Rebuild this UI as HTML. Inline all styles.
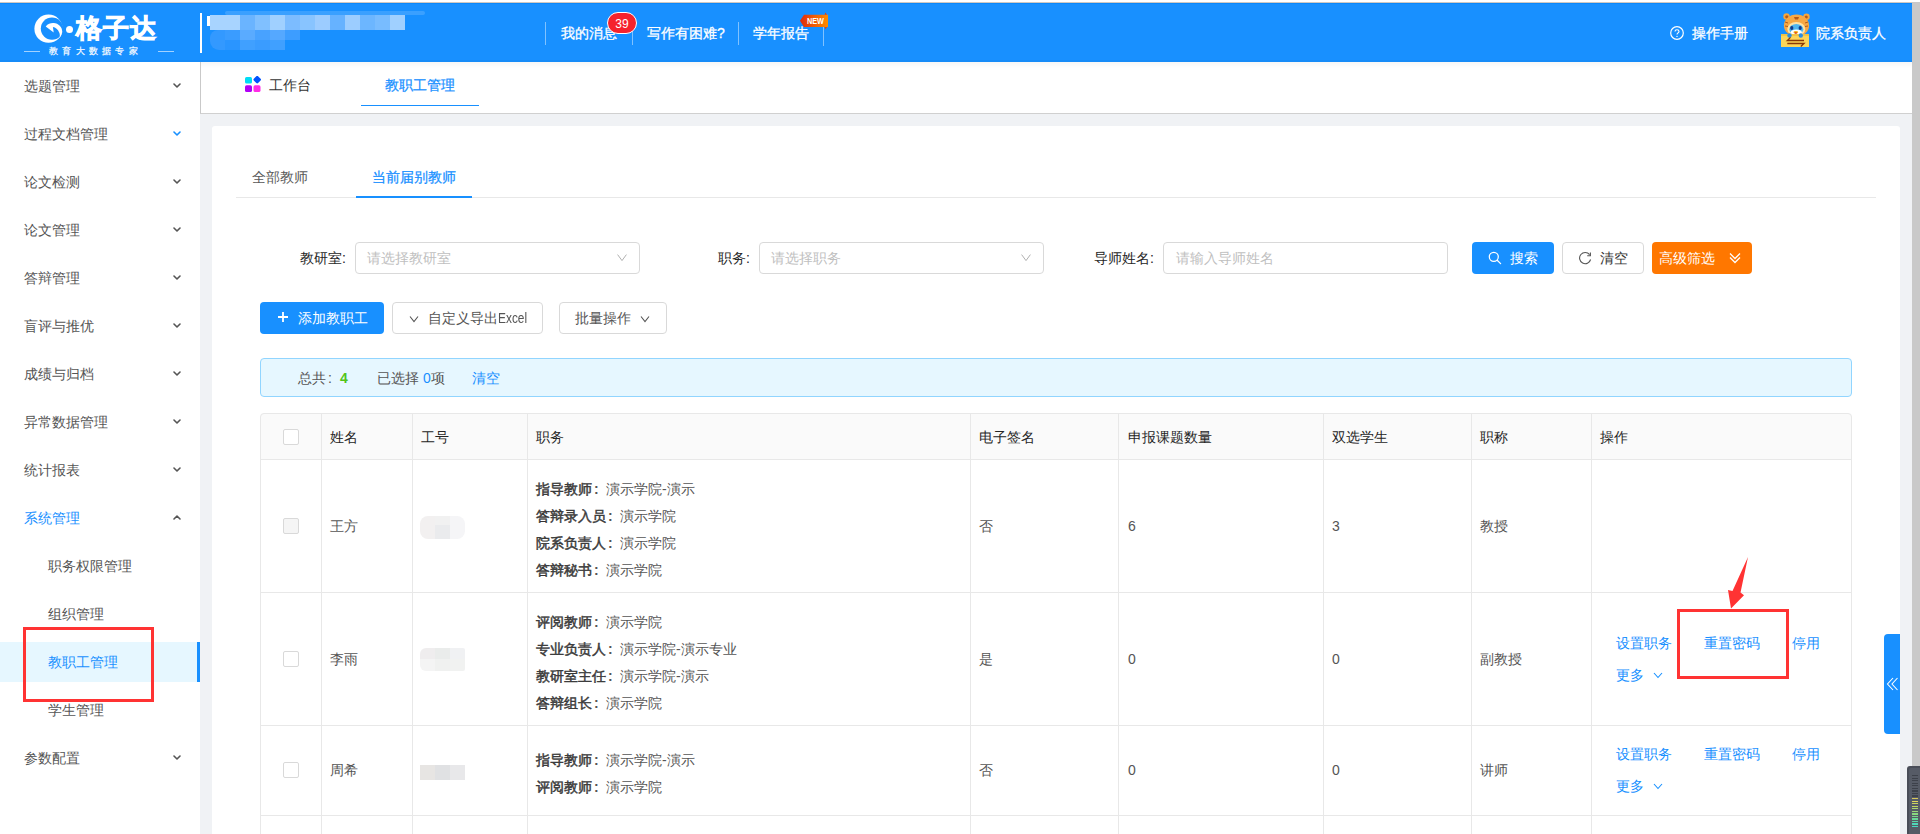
<!DOCTYPE html>
<html><head><meta charset="utf-8">
<style>
*{box-sizing:border-box;margin:0;padding:0}
html,body{width:1920px;height:834px;overflow:hidden;background:#fff;font-family:"Liberation Sans",sans-serif;font-size:14px;color:#333}
.a{position:absolute}
.t{position:absolute;white-space:nowrap;line-height:20px;font-size:14px}
#hdr{left:0;top:2px;width:1912px;height:60px;background:#1890ff;border-top:1px solid #cfc8c2}
#side{left:0;top:62px;width:200px;height:772px;background:#fff}
.mi{position:absolute;left:24px;color:#555;line-height:20px;font-size:14px;white-space:nowrap}
.chev{position:absolute;left:173px;width:8px;height:5px}
#main{left:200px;top:62px;width:1712px;height:772px;background:#f0f2f5}
#tabbar{left:200px;top:62px;width:1712px;height:52px;background:#fff;border-left:1px solid #c9c9c9;border-bottom:1px solid #d0d0d0}
#card{left:212px;top:126px;width:1688px;height:720px;background:#fff;border-radius:3px}
.sel{position:absolute;height:32px;border:1px solid #d9d9d9;border-radius:4px;background:#fff}
.ph{color:#bfbfbf}
.btn{position:absolute;border-radius:4px}
.th{position:absolute;top:413px;height:47px;background:#fafafa}
.vl{position:absolute;width:1px;background:#e8e8e8}
.hl{position:absolute;height:1px;background:#e8e8e8}
.cb{position:absolute;width:16px;height:16px;border:1px solid #d9d9d9;border-radius:2px;background:#fff}
.b{font-weight:bold}
.col{display:inline-block;width:14px;padding-left:2px}
b{font-weight:400;-webkit-text-stroke:0.45px #333}
.lk{color:#1890ff}
#sb{left:1912px;top:2px;width:8px;height:832px;background:#c9c9c9}
</style></head><body>
<!-- header -->
<div id="hdr" class="a"></div>
<div id="sb" class="a"></div>
<div class="a" style="left:0;top:3px;width:1912px;height:1px;background:#0a88fb"></div>
<!-- logo -->
<svg class="a" style="left:30px;top:12px" width="36" height="34" viewBox="30 12 36 34">
  <defs><mask id="lm"><rect x="30" y="12" width="36" height="34" fill="#fff"/><circle cx="52" cy="28.6" r="11.2" fill="#000"/></mask></defs>
  <circle cx="48.5" cy="28.7" r="14.1" fill="#fff" mask="url(#lm)"/>
  <path d="M45.7 26.5 C 48 23.5 51 22.8 53.7 23 C 58.5 23.4 62.2 27 62.2 31.6 C 62.2 34 61 36.5 59.4 38 C 60 36 60 34 59.2 32.4 C 58 29.5 55.5 27.3 52.9 27.1 L 53.7 32.4 Z" fill="#fff"/>
</svg>
<div class="a" style="left:66px;top:26px;width:7px;height:7px;border-radius:50%;background:#fff"></div>
<div class="t" style="left:76px;top:13px;font-size:26px;line-height:30px;color:#fff;font-weight:900;letter-spacing:1px;-webkit-text-stroke:0.9px #fff">格子达</div>
<div class="a" style="left:24px;top:51px;width:16px;height:1px;background:rgba(255,255,255,.6)"></div>
<div class="a" style="left:158px;top:51px;width:16px;height:1px;background:rgba(255,255,255,.6)"></div>
<div class="t" style="left:49px;top:45px;font-size:9px;line-height:12px;color:rgba(255,255,255,.9);letter-spacing:4.3px;font-weight:bold">教育大数据专家</div>
<!-- divider -->
<div class="a" style="left:200px;top:13px;width:2px;height:40px;background:#fff"></div>
<!-- pixelated blur -->
<div class="a" style="left:225px;top:11px;width:200px;height:4px;background:rgba(255,255,255,.15);border-radius:2px"></div>
<div class="a" style="left:210px;top:15px;width:195px;height:15px;display:flex">
<i style="width:15px;background:#a8d4ff"></i><i style="width:15px;background:#a8d4ff"></i><i style="width:15px;background:#6ab4ff"></i><i style="width:15px;background:#80c0ff"></i><i style="width:15px;background:#a0d0ff"></i><i style="width:15px;background:#7cbcff"></i><i style="width:15px;background:#88c4ff"></i><i style="width:15px;background:#9cccff"></i><i style="width:15px;background:#66b2ff"></i><i style="width:15px;background:#9ccdff"></i><i style="width:15px;background:#6cb6ff"></i><i style="width:15px;background:#78bcff"></i><i style="width:15px;background:#a0d0ff"></i>
</div>
<div class="a" style="left:210px;top:30px;width:90px;height:10px;display:flex;border-radius:8px 0 0 0;overflow:hidden">
<i style="width:15px;background:#3399ff"></i><i style="width:15px;background:#3a9cff"></i><i style="width:15px;background:#5aabff"></i><i style="width:15px;background:#48a2ff"></i><i style="width:15px;background:#55a8ff"></i><i style="width:15px;background:#3d9dff"></i>
</div>
<div class="a" style="left:210px;top:40px;width:75px;height:10px;display:flex;border-radius:0 0 0 9px;overflow:hidden">
<i style="width:15px;background:#3399ff"></i><i style="width:15px;background:#2a95ff"></i><i style="width:15px;background:#40a0ff"></i><i style="width:15px;background:#3a9cff"></i><i style="width:15px;background:#40a0ff"></i>
</div>
<div class="a" style="left:207px;top:16px;width:3px;height:10px;background:#fff"></div>
<!-- nav -->
<div class="a" style="left:545px;top:22px;width:1px;height:23px;background:rgba(255,255,255,.45)"></div>
<div class="t" style="left:561px;top:23px;color:#fff;-webkit-text-stroke:0.3px #fff">我的消息</div>
<div class="a" style="left:632px;top:22px;width:1px;height:23px;background:rgba(255,255,255,.45)"></div>
<div class="a" style="left:607px;top:12px;width:30px;height:22px;border-radius:11px;background:#f5222d;border:1px solid #fff;color:#fff;font-size:12px;line-height:22px;text-align:center">39</div>
<div class="t" style="left:647px;top:23px;color:#fff;-webkit-text-stroke:0.3px #fff">写作有困难?</div>
<div class="a" style="left:738px;top:22px;width:1px;height:23px;background:rgba(255,255,255,.45)"></div>
<div class="t" style="left:753px;top:23px;color:#fff;-webkit-text-stroke:0.3px #fff">学年报告</div>
<div class="a" style="left:823px;top:23px;width:1px;height:23px;background:rgba(255,255,255,.45)"></div>
<svg class="a" style="left:799px;top:12px" width="30" height="18" viewBox="0 0 30 18">
  <defs><linearGradient id="ng" x1="0" x2="1"><stop offset="0" stop-color="#e02a0c"/><stop offset="1" stop-color="#ff8c00"/></linearGradient></defs>
  <path d="M1 8.8 L5 2.8 L29 2.8 L29 15 L5 15 Z" fill="url(#ng)"/>
  <path d="M25.5 2.8 L26.5 0.5 L28 2.8 Z M25.5 15 L26.5 17.3 L28 15 Z" fill="#e8400a"/>
  <text x="8" y="12.2" font-family="Liberation Sans" font-size="9" font-weight="bold" fill="#fff" textLength="17" lengthAdjust="spacingAndGlyphs">NEW</text>
</svg>
<!-- right -->
<svg class="a" style="left:1670px;top:26px" width="14" height="14" viewBox="0 0 14 14"><circle cx="7" cy="7" r="6.3" fill="none" stroke="#fff" stroke-width="1.2"/><path d="M5 5.4 C5 3.2 9 3.2 9 5.4 C9 6.8 7 7 7 8.6" fill="none" stroke="#fff" stroke-width="1.1"/><circle cx="7" cy="10.4" r="0.7" fill="#fff"/></svg>
<div class="t" style="left:1692px;top:23px;color:#fff;-webkit-text-stroke:0.3px #fff">操作手册</div>
<svg class="a" style="left:1776px;top:10px" width="38" height="40" viewBox="1776 10 38 40">
  <circle cx="1786.5" cy="16.5" r="3.2" fill="#f6a63c"/><circle cx="1806.5" cy="16.8" r="3.2" fill="#f6a63c"/>
  <circle cx="1786.8" cy="16.8" r="1.6" fill="#b35a1a"/><circle cx="1806.2" cy="17" r="1.6" fill="#b35a1a"/>
  <ellipse cx="1796.5" cy="25.5" rx="12.6" ry="11" fill="#f7a844"/>
  <path d="M1794 17 L1799 17 L1798 19.5 L1795 19.5 Z" fill="#b35a1a"/>
  <path d="M1785 22 L1788 23 M1785 26 L1788 26.5 M1808 22 L1805 23 M1808 26 L1805 26.5" stroke="#b35a1a" stroke-width="1"/>
  <ellipse cx="1796.3" cy="29" rx="9" ry="7" fill="#fde3a8"/>
  <ellipse cx="1796.3" cy="29.2" rx="7" ry="5.2" fill="#4fb6f0"/>
  <ellipse cx="1796.3" cy="32.2" rx="5.5" ry="2.6" fill="#fff"/>
  <ellipse cx="1791.8" cy="28" rx="1.6" ry="2.1" fill="#123a8a"/><ellipse cx="1800.2" cy="28" rx="1.6" ry="2.1" fill="#123a8a"/>
  <ellipse cx="1795.8" cy="32.3" rx="2.4" ry="1.3" fill="#f5b31a"/>
  <ellipse cx="1795.8" cy="33" rx="1.3" ry="0.8" fill="#e02a0a"/>
  <rect x="1781" y="34.2" width="28" height="12.8" fill="#fcd559"/>
  <rect x="1781" y="34.2" width="28" height="1.6" fill="#f0c040"/>
  <circle cx="1789.5" cy="35.5" r="2.2" fill="#2e8ee0"/><circle cx="1800.8" cy="35.5" r="2.2" fill="#2e8ee0"/>
  <path d="M1790.5 37.4 L1787.3 40.5 L1804 40.5 M1787.3 43.5 L1804 43.5 L1800.8 46.5" fill="none" stroke="#8a3808" stroke-width="1.3"/>
</svg>
<div class="t" style="left:1816px;top:23px;color:#fff;-webkit-text-stroke:0.3px #fff">院系负责人</div>


<!-- sidebar -->
<div id="side" class="a"></div>
<div class="a" style="left:0;top:642px;width:200px;height:40px;background:#e6f7ff"></div>
<div class="a" style="left:197px;top:642px;width:3px;height:40px;background:#1890ff"></div>
<div class="mi" style="left:24px;top:76px;color:#555">选题管理</div>
<svg class="a" style="left:173px;top:83px" width="8" height="5" viewBox="0 0 8 5"><path d="M1 1 L4 4 L7 1" fill="none" stroke="#555" stroke-width="1.6" stroke-linecap="round" stroke-linejoin="round"/></svg>
<div class="mi" style="left:24px;top:124px;color:#555">过程文档管理</div>
<svg class="a" style="left:173px;top:131px" width="8" height="5" viewBox="0 0 8 5"><path d="M1 1 L4 4 L7 1" fill="none" stroke="#1890ff" stroke-width="1.6" stroke-linecap="round" stroke-linejoin="round"/></svg>
<div class="mi" style="left:24px;top:172px;color:#555">论文检测</div>
<svg class="a" style="left:173px;top:179px" width="8" height="5" viewBox="0 0 8 5"><path d="M1 1 L4 4 L7 1" fill="none" stroke="#555" stroke-width="1.6" stroke-linecap="round" stroke-linejoin="round"/></svg>
<div class="mi" style="left:24px;top:220px;color:#555">论文管理</div>
<svg class="a" style="left:173px;top:227px" width="8" height="5" viewBox="0 0 8 5"><path d="M1 1 L4 4 L7 1" fill="none" stroke="#555" stroke-width="1.6" stroke-linecap="round" stroke-linejoin="round"/></svg>
<div class="mi" style="left:24px;top:268px;color:#555">答辩管理</div>
<svg class="a" style="left:173px;top:275px" width="8" height="5" viewBox="0 0 8 5"><path d="M1 1 L4 4 L7 1" fill="none" stroke="#555" stroke-width="1.6" stroke-linecap="round" stroke-linejoin="round"/></svg>
<div class="mi" style="left:24px;top:316px;color:#555">盲评与推优</div>
<svg class="a" style="left:173px;top:323px" width="8" height="5" viewBox="0 0 8 5"><path d="M1 1 L4 4 L7 1" fill="none" stroke="#555" stroke-width="1.6" stroke-linecap="round" stroke-linejoin="round"/></svg>
<div class="mi" style="left:24px;top:364px;color:#555">成绩与归档</div>
<svg class="a" style="left:173px;top:371px" width="8" height="5" viewBox="0 0 8 5"><path d="M1 1 L4 4 L7 1" fill="none" stroke="#555" stroke-width="1.6" stroke-linecap="round" stroke-linejoin="round"/></svg>
<div class="mi" style="left:24px;top:412px;color:#555">异常数据管理</div>
<svg class="a" style="left:173px;top:419px" width="8" height="5" viewBox="0 0 8 5"><path d="M1 1 L4 4 L7 1" fill="none" stroke="#555" stroke-width="1.6" stroke-linecap="round" stroke-linejoin="round"/></svg>
<div class="mi" style="left:24px;top:460px;color:#555">统计报表</div>
<svg class="a" style="left:173px;top:467px" width="8" height="5" viewBox="0 0 8 5"><path d="M1 1 L4 4 L7 1" fill="none" stroke="#555" stroke-width="1.6" stroke-linecap="round" stroke-linejoin="round"/></svg>
<div class="mi" style="left:24px;top:508px;color:#1890ff">系统管理</div>
<svg class="a" style="left:173px;top:515px" width="8" height="5" viewBox="0 0 8 5"><path d="M1 4 L4 1 L7 4" fill="none" stroke="#555" stroke-width="1.6" stroke-linecap="round" stroke-linejoin="round"/></svg>
<div class="mi" style="left:48px;top:556px;color:#555">职务权限管理</div>
<div class="mi" style="left:48px;top:604px;color:#555">组织管理</div>
<div class="mi" style="left:48px;top:652px;color:#1890ff">教职工管理</div>
<div class="mi" style="left:48px;top:700px;color:#555">学生管理</div>
<div class="mi" style="left:24px;top:748px;color:#555">参数配置</div>
<svg class="a" style="left:173px;top:755px" width="8" height="5" viewBox="0 0 8 5"><path d="M1 1 L4 4 L7 1" fill="none" stroke="#555" stroke-width="1.6" stroke-linecap="round" stroke-linejoin="round"/></svg>
<div class="a" style="left:23px;top:627px;width:131px;height:75px;border:3px solid #f33"></div>

<!-- main gray bg -->
<div id="main" class="a"></div>
<div id="tabbar" class="a"></div>
<div id="card" class="a"></div>
<!-- tab bar -->
<div class="a" style="left:201px;top:62px;width:1711px;height:6px;background:linear-gradient(rgba(0,0,0,.035),rgba(0,0,0,0))"></div>
<div class="a" style="left:0;top:60px;width:1912px;height:2px;background:rgba(0,60,140,.06)"></div>
<svg class="a" style="left:245px;top:76px" width="16" height="16" viewBox="0 0 16 16">
  <rect x="0" y="1" width="7" height="6.5" rx="1.6" fill="#00dcf5"/>
  <rect x="9.2" y="0.6" width="6" height="6" rx="1.2" fill="#0052ff" transform="rotate(45 12.2 3.6)"/>
  <rect x="0" y="9.3" width="7" height="6.7" rx="1.6" fill="#b000f5"/>
  <rect x="8.5" y="9.3" width="7" height="6.7" rx="1.6" fill="#ff2ce6"/>
</svg>
<div class="t" style="left:269px;top:75px;color:#333">工作台</div>
<div class="t" style="left:385px;top:75px;color:#1890ff;-webkit-text-stroke:0.25px #1890ff">教职工管理</div>
<div class="a" style="left:361px;top:105px;width:118px;height:1px;background:#1890ff"></div>

<!-- inner tabs -->
<div class="t" style="left:252px;top:167px;color:#595959">全部教师</div>
<div class="t" style="left:372px;top:167px;color:#1890ff;-webkit-text-stroke:0.25px #1890ff">当前届别教师</div>
<div class="a" style="left:236px;top:197px;width:1640px;height:1px;background:#e8e8e8"></div>
<div class="a" style="left:356px;top:196px;width:116px;height:2px;background:#1890ff"></div>

<!-- filters -->
<div class="t" style="left:300px;top:248px;color:#262626">教研室:</div>
<div class="sel" style="left:355px;top:242px;width:285px"></div>
<div class="t ph" style="left:367px;top:248px">请选择教研室</div>
<svg class="a" style="left:617px;top:254px" width="10" height="8" viewBox="0 0 10 8"><path d="M0.6 0.6 L5 6.6 L9.4 0.6" fill="none" stroke="#b0b0b0" stroke-width="1"/></svg>

<div class="t" style="left:718px;top:248px;color:#262626">职务:</div>
<div class="sel" style="left:759px;top:242px;width:285px"></div>
<div class="t ph" style="left:771px;top:248px">请选择职务</div>
<svg class="a" style="left:1021px;top:254px" width="10" height="8" viewBox="0 0 10 8"><path d="M0.6 0.6 L5 6.6 L9.4 0.6" fill="none" stroke="#b0b0b0" stroke-width="1"/></svg>

<div class="t" style="left:1094px;top:248px;color:#262626">导师姓名:</div>
<div class="sel" style="left:1163px;top:242px;width:285px"></div>
<div class="t ph" style="left:1176px;top:248px">请输入导师姓名</div>

<div class="btn" style="left:1472px;top:242px;width:82px;height:32px;background:#1890ff"></div>
<svg class="a" style="left:1488px;top:251px" width="14" height="14" viewBox="0 0 14 14"><circle cx="5.8" cy="5.8" r="4.5" fill="none" stroke="#fff" stroke-width="1.25"/><path d="M9.2 9.2 L12.6 12.6" stroke="#fff" stroke-width="1.3" stroke-linecap="round"/></svg>
<div class="t" style="left:1510px;top:248px;color:#fff">搜索</div>

<div class="btn" style="left:1562px;top:242px;width:82px;height:32px;background:#fff;border:1px solid #d9d9d9"></div>
<svg class="a" style="left:1578px;top:251px" width="14" height="14" viewBox="0 0 14 14"><path d="M11.6 3.6 A5.6 5.6 0 1 0 12.6 8.5" fill="none" stroke="#555" stroke-width="1.1"/><path d="M12.4 1.6 L12.4 4.8 L9.2 4.8" fill="none" stroke="#555" stroke-width="1.1"/></svg>
<div class="t" style="left:1600px;top:248px;color:#333">清空</div>

<div class="btn" style="left:1652px;top:242px;width:100px;height:32px;background:#ff7700"></div>
<div class="t" style="left:1659px;top:248px;color:#fff">高级筛选</div>
<svg class="a" style="left:1729px;top:252px" width="12" height="12" viewBox="0 0 12 12"><path d="M1 1.5 L6 6.5 L11 1.5 M1 5.5 L6 10.5 L11 5.5" fill="none" stroke="#fff" stroke-width="1.3"/></svg>

<!-- row 2 buttons -->
<div class="btn" style="left:260px;top:302px;width:124px;height:32px;background:#1890ff"></div>
<svg class="a" style="left:277px;top:311px" width="12" height="12" viewBox="0 0 12 12"><path d="M6 1 L6 11 M1 6 L11 6" stroke="#fff" stroke-width="1.8"/></svg>
<div class="t" style="left:298px;top:308px;color:#fff">添加教职工</div>

<div class="btn" style="left:392px;top:302px;width:151px;height:32px;background:#fff;border:1px solid #d9d9d9"></div>
<svg class="a" style="left:409px;top:315px" width="10" height="8" viewBox="0 0 10 8"><path d="M1 1.5 L5 6.5 L9 1.5" fill="none" stroke="#555" stroke-width="1.1"/></svg>
<div class="t" style="left:428px;top:308px;color:#555">自定义导出<span style="display:inline-block;transform:scaleX(.85);transform-origin:0 50%">Excel</span></div>

<div class="btn" style="left:559px;top:302px;width:108px;height:32px;background:#fff;border:1px solid #d9d9d9"></div>
<div class="t" style="left:575px;top:308px;color:#555">批量操作</div>
<svg class="a" style="left:640px;top:315px" width="10" height="8" viewBox="0 0 10 8"><path d="M1 1.5 L5 6.5 L9 1.5" fill="none" stroke="#555" stroke-width="1.1"/></svg>

<!-- info bar -->
<div class="a" style="left:260px;top:358px;width:1592px;height:39px;background:#e6f7ff;border:1px solid #91d5ff;border-radius:4px"></div>
<div class="t" style="left:298px;top:368px;color:#555">总共<span class="col">:</span></div>
<div class="t b" style="left:340px;top:368px;color:#52c41a">4</div>
<div class="t" style="left:377px;top:368px;color:#555">已选择 <span style="color:#1890ff">0</span>项</div>
<div class="t" style="left:472px;top:368px;color:#1890ff">清空</div>


<div class="a" style="left:260px;top:413px;width:1592px;height:47px;background:#fafafa;border-radius:4px 4px 0 0"></div>
<div class="a" style="left:260px;top:413px;width:1592px;height:430px;border:1px solid #e8e8e8;border-radius:4px 4px 0 0"></div>
<div class="vl" style="left:321px;top:414px;height:420px"></div>
<div class="vl" style="left:412px;top:414px;height:420px"></div>
<div class="vl" style="left:527px;top:414px;height:420px"></div>
<div class="vl" style="left:970px;top:414px;height:420px"></div>
<div class="vl" style="left:1118px;top:414px;height:420px"></div>
<div class="vl" style="left:1323px;top:414px;height:420px"></div>
<div class="vl" style="left:1471px;top:414px;height:420px"></div>
<div class="vl" style="left:1591px;top:414px;height:420px"></div>
<div class="hl" style="left:261px;top:459px;width:1590px"></div>
<div class="hl" style="left:261px;top:592px;width:1590px"></div>
<div class="hl" style="left:261px;top:725px;width:1590px"></div>
<div class="hl" style="left:261px;top:815px;width:1590px"></div>
<div class="cb" style="left:283px;top:429px"></div>
<div class="t" style="left:330px;top:427px;color:#262626">姓名</div>
<div class="t" style="left:421px;top:427px;color:#262626">工号</div>
<div class="t" style="left:536px;top:427px;color:#262626">职务</div>
<div class="t" style="left:979px;top:427px;color:#262626">电子签名</div>
<div class="t" style="left:1128px;top:427px;color:#262626">申报课题数量</div>
<div class="t" style="left:1332px;top:427px;color:#262626">双选学生</div>
<div class="t" style="left:1480px;top:427px;color:#262626">职称</div>
<div class="t" style="left:1600px;top:427px;color:#262626">操作</div>
<div class="cb" style="left:283px;top:518px;background:#f5f5f5"></div>
<div class="t" style="left:330px;top:516px;color:#555">王方</div>
<div class="t" style="left:536px;top:479px;color:#555"><b style="color:#444">指导教师</b><span class="col" style="font-weight:bold">:</span>演示学院-演示</div>
<div class="t" style="left:536px;top:506px;color:#555"><b style="color:#444">答辩录入员</b><span class="col" style="font-weight:bold">:</span>演示学院</div>
<div class="t" style="left:536px;top:533px;color:#555"><b style="color:#444">院系负责人</b><span class="col" style="font-weight:bold">:</span>演示学院</div>
<div class="t" style="left:536px;top:560px;color:#555"><b style="color:#444">答辩秘书</b><span class="col" style="font-weight:bold">:</span>演示学院</div>
<div class="t" style="left:979px;top:516px;color:#555">否</div>
<div class="t" style="left:1128px;top:516px;color:#555">6</div>
<div class="t" style="left:1332px;top:516px;color:#555">3</div>
<div class="t" style="left:1480px;top:516px;color:#555">教授</div>
<div class="cb" style="left:283px;top:651px;background:#fff"></div>
<div class="t" style="left:330px;top:649px;color:#555">李雨</div>
<div class="t" style="left:536px;top:612px;color:#555"><b style="color:#444">评阅教师</b><span class="col" style="font-weight:bold">:</span>演示学院</div>
<div class="t" style="left:536px;top:639px;color:#555"><b style="color:#444">专业负责人</b><span class="col" style="font-weight:bold">:</span>演示学院-演示专业</div>
<div class="t" style="left:536px;top:666px;color:#555"><b style="color:#444">教研室主任</b><span class="col" style="font-weight:bold">:</span>演示学院-演示</div>
<div class="t" style="left:536px;top:693px;color:#555"><b style="color:#444">答辩组长</b><span class="col" style="font-weight:bold">:</span>演示学院</div>
<div class="t" style="left:979px;top:649px;color:#555">是</div>
<div class="t" style="left:1128px;top:649px;color:#555">0</div>
<div class="t" style="left:1332px;top:649px;color:#555">0</div>
<div class="t" style="left:1480px;top:649px;color:#555">副教授</div>
<div class="t lk" style="left:1616px;top:633px">设置职务</div>
<div class="t lk" style="left:1704px;top:633px">重置密码</div>
<div class="t lk" style="left:1792px;top:633px">停用</div>
<div class="t lk" style="left:1616px;top:665px">更多</div>
<svg class="a" style="left:1653px;top:672px" width="10" height="7" viewBox="0 0 10 7"><path d="M1 1 L5 5.5 L9 1" fill="none" stroke="#1890ff" stroke-width="1.1"/></svg>
<div class="cb" style="left:283px;top:762px;background:#fff"></div>
<div class="t" style="left:330px;top:760px;color:#555">周希</div>
<div class="t" style="left:536px;top:750px;color:#555"><b style="color:#444">指导教师</b><span class="col" style="font-weight:bold">:</span>演示学院-演示</div>
<div class="t" style="left:536px;top:777px;color:#555"><b style="color:#444">评阅教师</b><span class="col" style="font-weight:bold">:</span>演示学院</div>
<div class="t" style="left:979px;top:760px;color:#555">否</div>
<div class="t" style="left:1128px;top:760px;color:#555">0</div>
<div class="t" style="left:1332px;top:760px;color:#555">0</div>
<div class="t" style="left:1480px;top:760px;color:#555">讲师</div>
<div class="t lk" style="left:1616px;top:744px">设置职务</div>
<div class="t lk" style="left:1704px;top:744px">重置密码</div>
<div class="t lk" style="left:1792px;top:744px">停用</div>
<div class="t lk" style="left:1616px;top:776px">更多</div>
<svg class="a" style="left:1653px;top:783px" width="10" height="7" viewBox="0 0 10 7"><path d="M1 1 L5 5.5 L9 1" fill="none" stroke="#1890ff" stroke-width="1.1"/></svg>
<div class="a" style="left:420px;top:516px;width:45px;height:23px;border-radius:8px;overflow:hidden;display:flex"><i style="width:15px;background:#f2f0f0"></i><i style="width:15px;background:linear-gradient(#f1f1f1 40%,#eaebed 40%)"></i><i style="width:15px;background:#f5f5f7"></i></div>
<div class="a" style="left:420px;top:648px;width:45px;height:23px;border-radius:6px 2px 2px 6px;overflow:hidden;display:flex"><i style="width:15px;background:linear-gradient(#efedee 50%,#f4f4f4 50%)"></i><i style="width:15px;background:linear-gradient(#eaeceb 50%,#f0f1f0 50%)"></i><i style="width:15px;background:linear-gradient(#f0f1f3 50%,#f1f2f1 50%)"></i></div>
<div class="a" style="left:420px;top:765px;width:45px;height:15px;display:flex"><i style="width:15px;background:#e7e5e3"></i><i style="width:15px;background:#e0e1e3"></i><i style="width:15px;background:#e8e8ea"></i></div>
<div class="a" style="left:1677px;top:609px;width:112px;height:70px;border:3px solid #f33"></div>
<svg class="a" style="left:1720px;top:550px" width="40" height="65" viewBox="1720 550 40 65"><path d="M1748 557 L1740.5 592.5 L1744 595.2 L1731 608.5 L1728 590 L1732.5 591 Z" fill="#f33"/></svg>
<div class="a" style="left:1884px;top:634px;width:16px;height:100px;background:#1890ff;border-radius:4px 0 0 4px"></div>
<svg class="a" style="left:1886px;top:677px" width="13" height="14" viewBox="0 0 13 14"><path d="M7 1 L1.5 7 L7 13 M11.5 1 L6 7 L11.5 13" fill="none" stroke="#fff" stroke-width="1.1"/></svg>
<div class="a" style="left:1907px;top:766px;width:13px;height:68px;background:#4a4e58;border-radius:3px 0 0 0"></div>
<div class="a" style="left:1909px;top:768px;width:11px;height:66px;background:#565b66;border-radius:2px 0 0 0"></div>
<div class="a" style="left:1912px;top:775.00px;width:6px;height:1.3px;background:#3d414a"></div>
<div class="a" style="left:1912px;top:777.55px;width:6px;height:1.3px;background:#3d414a"></div>
<div class="a" style="left:1912px;top:780.10px;width:6px;height:1.3px;background:#3d414a"></div>
<div class="a" style="left:1912px;top:782.65px;width:6px;height:1.3px;background:#3d414a"></div>
<div class="a" style="left:1912px;top:785.20px;width:6px;height:1.3px;background:#3d414a"></div>
<div class="a" style="left:1912px;top:787.75px;width:6px;height:1.3px;background:#3d414a"></div>
<div class="a" style="left:1912px;top:790.30px;width:6px;height:1.3px;background:#3d414a"></div>
<div class="a" style="left:1912px;top:792.85px;width:6px;height:1.3px;background:#3d414a"></div>
<div class="a" style="left:1912px;top:795.40px;width:6px;height:1.3px;background:#3d414a"></div>
<div class="a" style="left:1912px;top:797.95px;width:6px;height:1.3px;background:#d8c85a"></div>
<div class="a" style="left:1912px;top:800.50px;width:6px;height:1.3px;background:#e0d85a"></div>
<div class="a" style="left:1912px;top:803.05px;width:6px;height:1.3px;background:#c8d460"></div>
<div class="a" style="left:1912px;top:805.60px;width:6px;height:1.3px;background:#c0d860"></div>
<div class="a" style="left:1912px;top:808.15px;width:6px;height:1.3px;background:#a8d870"></div>
<div class="a" style="left:1912px;top:810.70px;width:6px;height:1.3px;background:#98d878"></div>
<div class="a" style="left:1912px;top:813.25px;width:6px;height:1.3px;background:#88d880"></div>
<div class="a" style="left:1912px;top:815.80px;width:6px;height:1.3px;background:#78d888"></div>
<div class="a" style="left:1912px;top:818.35px;width:6px;height:1.3px;background:#68d898"></div>
<div class="a" style="left:1912px;top:820.90px;width:6px;height:1.3px;background:#58d8a8"></div>
<div class="a" style="left:1912px;top:823.45px;width:6px;height:1.3px;background:#50d8b8"></div>
<div class="a" style="left:1912px;top:826.00px;width:6px;height:1.3px;background:#48d8c0"></div>
</body></html>
